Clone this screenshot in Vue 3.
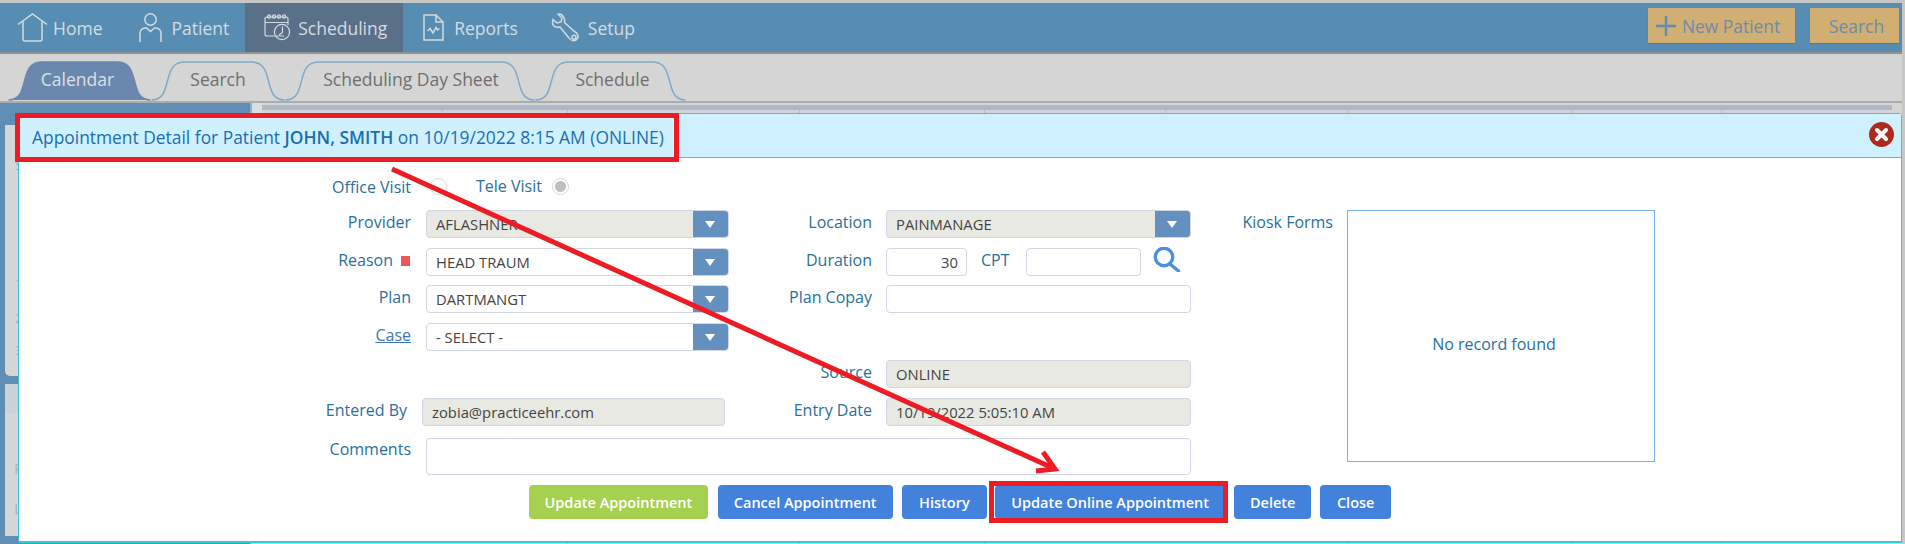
<script setup>
const navItems = [
  { key: 'home', label: 'Home' },
  { key: 'patient', label: 'Patient' },
  { key: 'scheduling', label: 'Scheduling', active: true },
  { key: 'reports', label: 'Reports' },
  { key: 'setup', label: 'Setup' }
]

const tabPath = (w) =>
  `M0.5 39 C12 39 14 30 17 18 C20 6 24 1 34 1 L${w - 34} 1 C${w - 24} 1 ${w - 20} 6 ${w - 17} 18 C${w - 14} 30 ${w - 12} 39 ${w - 0.5} 39`

const tabs = [
  { label: 'Calendar', width: 143, active: true },
  { label: 'Search', width: 134 },
  { label: 'Scheduling Day Sheet', width: 250 },
  { label: 'Schedule', width: 151 }
].map((t) => ({ ...t, d: tabPath(t.width) }))

const columns = [181, 125, 232, 185, 181, 182, 224, 150]
const buttons = [
  { label: 'Update Appointment', cls: 'green' },
  { label: 'Cancel Appointment', cls: 'blue' },
  { label: 'History', cls: 'blue hist' },
  { label: 'Update Online Appointment', cls: 'blue wide' },
  { label: 'Delete', cls: 'blue' },
  { label: 'Close', cls: 'blue shut' }
]
</script>

<template>
  <div class="page">
    <header class="nav">
      <a v-for="item in navItems" :key="item.key" class="nav-item" :class="[item.key, { active: item.active }]">
        <svg v-if="item.key === 'home'" class="ico" width="31" height="29" viewBox="0 0 31 29">
          <path d="M1 11.5 L15.5 1 L30 11.5 M6 8.5 V26 Q6 28 8 28 H23 Q25 28 25 26 V8.5" />
        </svg>
        <svg v-else-if="item.key === 'patient'" class="ico" width="23" height="29" viewBox="0 0 23 29">
          <circle cx="11.5" cy="6.5" r="5.7" />
          <path d="M1 29 V20 C1 16 5 14.5 7.5 15 L11.5 18.5 L15.5 15 C18 14.5 22 16 22 20 V29" />
        </svg>
        <svg v-else-if="item.key === 'scheduling'" class="ico" width="27" height="27" viewBox="0 0 27 27">
          <path d="M20 22 H3 Q1 22 1 20 V5 Q1 3 3 3 H22 Q24 3 24 5 V11 M1 8.5 H24" />
          <circle cx="5" cy="2.5" r="1.6" /><circle cx="10" cy="2.5" r="1.6" /><circle cx="15" cy="2.5" r="1.6" /><circle cx="20" cy="2.5" r="1.6" />
          <circle cx="18" cy="18" r="7.6" />
          <path d="M18.5 12.5 V18.5 L15 21" />
        </svg>
        <svg v-else-if="item.key === 'reports'" class="ico" width="21" height="27" viewBox="0 0 21 27">
          <path d="M1 1 H13 L20 8 V26 H1 Z M13 1 V8 H20" />
          <path d="M4.5 17 L7 14.5 L10 19 L13 13.5 L14.5 16 L16.5 14.5" />
        </svg>
        <svg v-else class="ico" width="30" height="29" viewBox="0 0 30 29">
          <path d="M9 1.2 L13 5 L12 9 L8 10 L4 6.5 C3 10 4 13 7 14 C8.5 14.4 10 14.3 11 14 L20 25 C22 28.5 27 28.5 28.5 25.5 C30 22.5 28 19.5 25.5 18.5 L15.5 9.5 C16.2 6 14.5 2 11 1 C10.3 0.9 9.6 1 9 1.2 Z" />
          <circle cx="25" cy="24.3" r="2" />
        </svg>
        <span>{{ item.label }}</span>
      </a>
      <div class="nav-actions">
        <button class="gold new">
          <svg width="20" height="20" viewBox="0 0 20 20"><path d="M0 10 H20 M10 0 V20" /></svg>
          New Patient
        </button>
        <button class="gold find">Search</button>
      </div>
    </header>

    <nav class="tabbar">
      <div
        v-for="tab in tabs"
        :key="tab.label"
        class="tab"
        :class="{ current: tab.active }"
        :style="{ width: tab.width + 'px' }"
      >
        <svg class="tab-shape" :width="tab.width" height="40" :viewBox="`0 0 ${tab.width} 40`">
          <path :d="tab.d" />
        </svg>
        <span class="tab-label">{{ tab.label }}</span>
      </div>
    </nav>

    <main class="stage">
      <aside class="side">
        <div class="side-top"><span>S</span><span>1</span><span>2</span><span>3</span></div>
        <div class="side-bottom"><i></i><span>P</span><span>L</span></div>
      </aside>
      <div class="sliver"></div>
      <section class="sched">
        <div class="sched-head"></div>
        <div class="sched-cols">
          <div v-for="(w, i) in columns" :key="i" class="col" :style="{ width: w + 'px' }"></div>
        </div>
      </section>
    </main>

    <section class="modal">
      <div class="modal-head">
        <h2>Appointment Detail for Patient <b>JOHN, SMITH</b> on 10/19/2022 8:15 AM (ONLINE)</h2>
        <svg class="close" width="25" height="25" viewBox="0 0 25 25">
          <circle cx="12.5" cy="12.5" r="12.5" fill="#ab2c1c" />
          <path d="M8 8 L17 17 M17 8 L8 17" stroke="#fff" stroke-width="4" stroke-linecap="round" />
        </svg>
      </div>

      <div class="form">
        <label class="lbl visit">Office Visit</label>
        <div class="visit-cell">
          <span class="radio first"></span>
          <span class="tele">Tele Visit</span>
          <span class="radio on"></span>
        </div>

        <label class="lbl r2 c1">Provider</label>
        <div class="field ro r2 c2"><span>AFLASHNER</span><em class="caret"></em></div>
        <label class="lbl r2 c3">Location</label>
        <div class="field ro r2 c4"><span>PAINMANAGE</span><em class="caret"></em></div>
        <label class="lbl r2 c5 kiosk">Kiosk Forms</label>
        <div class="kiosk-box">No record found</div>

        <label class="lbl r3 c1 reason">Reason<i class="req"></i></label>
        <div class="field r3 c2"><span>HEAD TRAUM</span><em class="caret"></em></div>
        <label class="lbl r3 c3">Duration</label>
        <div class="dur r3 c4">
          <div class="field num"><span>30</span></div>
          <label class="cpt">CPT</label>
          <div class="field cpt-in"></div>
          <svg class="mag" width="28" height="25" viewBox="0 0 28 25">
            <circle cx="11" cy="10" r="8.7" />
            <path d="M17 17 L25.5 24" />
          </svg>
        </div>

        <label class="lbl r4 c1">Plan</label>
        <div class="field r4 c2"><span>DARTMANGT</span><em class="caret"></em></div>
        <label class="lbl r4 c3">Plan Copay</label>
        <div class="field r4 c4"></div>

        <label class="lbl r5 c1"><u>Case</u></label>
        <div class="field r5 c2"><span>- SELECT -</span><em class="caret"></em></div>

        <label class="lbl r6 c3">Source</label>
        <div class="field ro r6 c4"><span>ONLINE</span></div>

        <label class="lbl r7 c1 entered">Entered By</label>
        <div class="field ro r7 c2 entered-in"><span>zobia@practiceehr.com</span></div>
        <label class="lbl r7 c3">Entry Date</label>
        <div class="field ro r7 c4"><span>10/19/2022 5:05:10 AM</span></div>

        <label class="lbl r8 c1 top">Comments</label>
        <div class="field comments"></div>
      </div>

      <div class="actions">
        <button v-for="b in buttons" :key="b.label" class="btn" :class="b.cls">{{ b.label }}</button>
      </div>
    </section>

    <svg class="marks" width="1905" height="544" viewBox="0 0 1905 544">
      <rect x="17.5" y="115.5" width="659" height="44" />
      <rect x="991.5" y="483.5" width="234" height="37" />
      <path d="M392 169 L1055 469" />
      <path d="M1043 452 L1055 469 L1036 471" />
    </svg>
  </div>
</template>

<style>
html, body { margin: 0; background: #cfcfcf; }
</style>

<style scoped>
.page {
  position: relative;
  width: 1905px;
  height: 544px;
  box-sizing: border-box;
  padding: 3px 3px 0 0;
  overflow: hidden;
  background: #c6c6c6;
  font-family: "Open Sans", "Liberation Sans", sans-serif;
}
.nav {
  display: flex;
  align-items: stretch;
  height: 49px;
  background: #578db3;
  border-bottom: 2px solid #8f9396;
  box-sizing: content-box;
}
.nav-item {
  display: flex;
  align-items: center;
  gap: 6px;
  padding: 0 15px 0 19px;
  color: #d3dce3;
  font-size: 17.5px;
}
.nav-item.home { padding-left: 17px; padding-right: 18px; gap: 5px; }
.nav-item.patient { padding-right: 16px; gap: 9px; }
.nav-item.scheduling { gap: 7px; padding-right: 16px; }
.nav-item.reports { padding-left: 20px; padding-right: 16px; gap: 10px; }
.nav-item.setup { padding-left: 15px; gap: 9px; }
.nav-item.active { background: #5a6f88; }
.ico { fill: none; stroke: #d3dbe0; stroke-width: 1.5; flex: none; }
.nav-item.scheduling .ico { stroke-width: 1.2; }
.nav-actions {
  margin-left: auto;
  display: flex;
  gap: 15px;
  align-items: flex-start;
  padding: 5px 3px 0 0;
}
.gold {
  height: 35px;
  border: 0;
  padding: 0;
  background: #d1ae72;
  color: #6d8bad;
  font: 17.4px "Open Sans", sans-serif;
  display: flex;
  align-items: center;
  box-shadow: 0 1px 1px rgba(0, 0, 0, 0.12);
}
.gold svg { fill: none; stroke: #5f8db3; stroke-width: 2.4; }
.gold.new { width: 147px; padding-left: 8px; gap: 6px; }
.gold.find { width: 89px; padding-left: 19px; }

.tabbar {
  display: flex;
  align-items: flex-end;
  height: 47px;
  padding-left: 8px;
  background: #d5d5d5;
  border-bottom: 2px solid #acacac;
}
.tab {
  position: relative;
  flex: none;
  height: 40px;
  display: flex;
  align-items: center;
  justify-content: center;
  color: #6f6f6f;
  font-size: 17.5px;
}
.tab-shape { position: absolute; left: 0; top: 0; }
.tab-shape path { fill: none; stroke: #7faac8; stroke-width: 1.5; }
.tab.current { color: #d9e0e8; }
.tab.current .tab-shape path { fill: #6a88ad; stroke: #6a88ad; }
.tab-label { position: relative; top: -2px; }
.tab.current .tab-label { left: -2px; }
.tab:nth-child(3) .tab-label { left: 1px; }
.tab:nth-child(4) .tab-label { left: 2px; }

.stage {
  display: flex;
  height: 442px;
  background: #5f8db3;
}
.side { flex: none; width: 250px; padding: 22px 0 0 5px; box-sizing: border-box; }
.side-top {
  height: 251px;
  background: #d6d6d6;
  border-radius: 0 0 0 5px;
  display: flex;
  flex-direction: column;
  align-items: flex-start;
  padding-left: 10px;
  color: #b0b0b0;
  font-size: 13px;
}
.side-top span:nth-child(1) { margin-top: 31px; }
.side-top span:nth-child(2) { margin-top: 100px; }
.side-top span:nth-child(3) { margin-top: 17px; }
.side-top span:nth-child(4) { margin-top: 14px; }
.side-bottom {
  margin-top: 8px;
  height: 152px;
  background: #d6d6d6;
  display: flex;
  flex-direction: column;
  color: #a3b5c5;
  font-size: 15px;
  padding-left: 9px;
}
.side-bottom i { display: block; height: 29px; margin-left: -9px; background: #cbd1d5; }
.side-bottom span:nth-of-type(1) { margin-top: 45px; }
.side-bottom span:nth-of-type(2) { margin-top: 20px; }
.sliver { flex: none; width: 12px; background: #dcdfe2; border-left: 2px solid #8cb4cd; box-sizing: border-box; }
.sched { flex: 1; background: #d4d4d4; }
.sched-head { height: 5px; margin-top: 2px; background: #adb8c8; width: 1630px; }
.sched-cols { display: flex; height: 100%; background: #d4d4d4; }
.col { flex: none; border-right: 1px solid #bdbdbd; box-sizing: border-box; }

.modal {
  position: absolute;
  left: 18px;
  top: 113px;
  width: 1884px;
  height: 430px;
  box-sizing: border-box;
  display: flex;
  flex-direction: column;
  background: #fff;
  border: 1px solid #39c8d8;
  border-bottom-width: 2px;
  border-radius: 4px 4px 0 3px;
}
.modal-head {
  flex: none;
  height: 43px;
  box-sizing: content-box;
  display: flex;
  align-items: center;
  justify-content: space-between;
  padding: 0 7px 0 13px;
  background: #cff1ff;
  border-bottom: 1px solid #39c8d8;
}
.modal-head h2 { margin: 0; font-size: 17.4px; font-weight: 400; color: #1a6eb0; position: relative; top: 1px; }
.modal-head b { font-weight: 600; }
.close { position: relative; top: -1px; }

.form {
  display: grid;
  grid-template-columns: 407px 303px 157px 305px 156px 308px;
  grid-template-rows: repeat(7, 28px) 40px;
  row-gap: 9.5px;
  padding-top: 14.5px;
  font-size: 16px;
  color: #2b6f9b;
}
.lbl { text-align: right; padding-right: 15px; line-height: 25px; white-space: nowrap; }
.top { padding-top: 2px; }
.c1 { grid-column: 1; }
.c2 { grid-column: 2; }
.c3 { grid-column: 3; padding-right: 14px; }
.c4 { grid-column: 4; }
.c5 { grid-column: 5; padding-right: 14px; }
.r2 { grid-row: 2; }
.r3 { grid-row: 3; }
.r4 { grid-row: 4; }
.r5 { grid-row: 5; }
.r6 { grid-row: 6; }
.r7 { grid-row: 7; }
.r8 { grid-row: 8; }
u { color: #3a78b8; }
.visit { grid-row: 1; grid-column: 1; padding-top: 2.5px; }
.visit-cell { grid-row: 1; grid-column: 2; display: flex; align-items: center; }
.radio {
  flex: none;
  width: 15px;
  height: 15px;
  border: 1px solid #d7d7d7;
  border-radius: 50%;
  background: #fff;
  position: relative;
}
.radio.first { margin-left: 4px; }
.radio.on { margin-left: 10px; background: radial-gradient(circle, #bfbfbf 0 5px, #fff 6px); }
.tele { margin-left: 29px; position: relative; top: -1px; }
.reason { padding-right: 16px; }
.req { display: inline-block; width: 9px; height: 10px; margin-left: 8px; background: #f25555; }

.field {
  display: flex;
  align-items: center;
  justify-content: space-between;
  height: 28px;
  box-sizing: border-box;
  border: 1px solid #cfd6e6;
  border-radius: 4px;
  background: #fff;
  color: #444;
  font-size: 14.8px;
  overflow: hidden;
}
.field > span { padding-left: 9px; }
.field.ro { background: #e9e9e3; color: #444; }
.caret {
  flex: none;
  width: 35px;
  height: 100%;
  background: #6490c0;
  position: relative;
}
.caret::after {
  content: "";
  position: absolute;
  left: 12px;
  top: 10px;
  border: 5.5px solid transparent;
  border-top: 7px solid #fff;
  border-bottom: 0;
}
.dur { display: flex; align-items: flex-start; }
.num { width: 81px; justify-content: flex-end; }
.num > span { padding: 0 8px 0 0; }
.cpt { margin-left: 14px; width: 45px; line-height: 24px; }
.cpt-in { width: 115px; }
.mag { margin: -1px 0 0 12px; fill: none; stroke: #4a90e2; stroke-width: 3.4; stroke-linecap: round; }
.kiosk-box {
  grid-column: 6;
  grid-row: 2 / span 7;
  height: 252px;
  box-sizing: border-box;
  display: flex;
  align-items: center;
  justify-content: center;
  padding: 16px 14px 0 0;
  border: 1px solid #79b2f2;
  color: #2b6f9b;
  font-size: 16px;
}
.entered { padding-right: 19px; }
.entered-in { margin: 0 4px 0 -4px; }
.comments {
  grid-row: 8;
  grid-column: 2 / span 3;
  height: 37px;
  margin-top: 3px;
  width: 765px;
}

.actions {
  display: flex;
  justify-content: center;
  gap: 9px;
  margin-top: 10px;
}
.btn {
  height: 34px;
  padding: 0 16px;
  border: 0;
  border-radius: 4px;
  color: #fff;
  font: 600 14.5px "Open Sans", sans-serif;
  white-space: nowrap;
}
.btn.green { background: #a6d04f; margin-right: 1px; padding: 0 15.5px; }
.btn.blue { background: #4282dc; }
.btn.hist { padding: 0 17.5px; margin-right: -1px; }
.btn.shut { padding: 0 16.5px; }

.marks { position: absolute; left: 0; top: 0; pointer-events: none; fill: none; stroke: #ed1c24; stroke-width: 5; }
</style>
